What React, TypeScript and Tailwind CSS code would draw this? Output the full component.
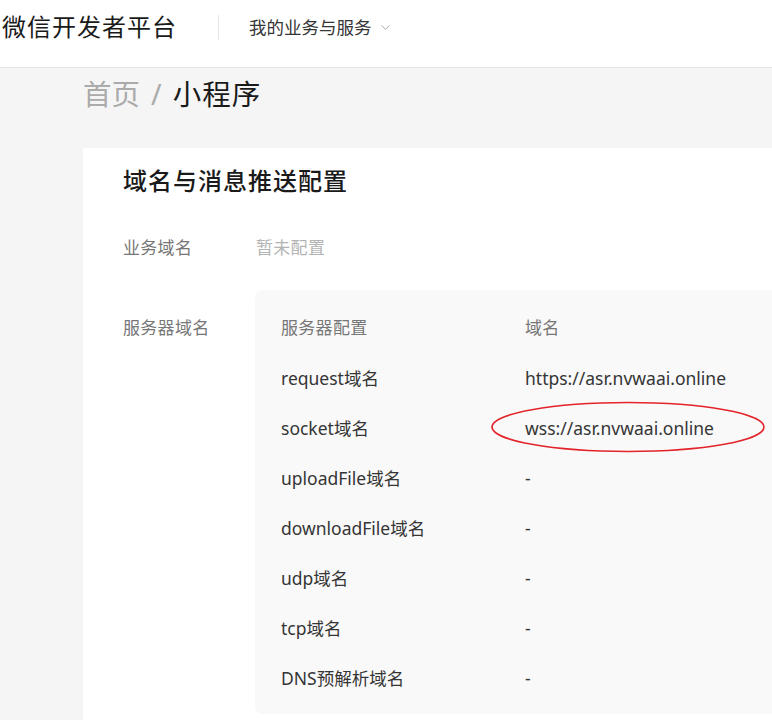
import { ChevronDown } from 'lucide-react';

const font = { fontFamily: '"Noto Sans", "Noto Sans CJK SC", sans-serif' };

const rows: [string, string][] = [
  ['request域名', 'https://asr.nvwaai.online'],
  ['socket域名', 'wss://asr.nvwaai.online'],
  ['uploadFile域名', '-'],
  ['downloadFile域名', '-'],
  ['udp域名', '-'],
  ['tcp域名', '-'],
  ['DNS预解析域名', '-'],
];

export default function App() {
  return (
    <div className="w-[772px] h-[720px] overflow-hidden bg-[#f5f5f5]" style={font}>
      <header className="h-[68px] bg-white border-b border-[#e4e4e4]">
        <div className="h-[54px] flex items-center">
          <h1 className="pl-[2px] text-[24px] text-[#1a1a1a] tracking-[1px] leading-none">微信开发者平台</h1>
          <div className="ml-[41px] w-px h-[25px] bg-[#e5e5e5]" />
          <div className="ml-[30px] flex items-center gap-[6px] text-[17.5px] text-[#353535]">
            我的业务与服务
            <ChevronDown size={15} strokeWidth={1.3} className="text-[#9a9a9a] mt-[1px]" />
          </div>
        </div>
      </header>

      <div className="pl-[83px]">
        <div className="pt-[6px] h-[80px] flex items-start text-[28.5px] leading-[40px]">
          <span className="text-[#ababab]">首页</span>
          <span className="text-[#ababab] mx-[11px]">/</span>
          <span className="text-[#1a1a1a] tracking-[1px]">小程序</span>
        </div>

        <div className="w-[900px] bg-white pl-[40px] pt-[16px] pb-[40px]">
          <h2 className="text-[24px] leading-[34px] font-medium text-[#1a1a1a] tracking-[1px]">域名与消息推送配置</h2>

          <div className="mt-[25px] h-[50px] flex items-center text-[17px]">
            <span className="w-[133px] text-[#777] tracking-[0.3px]">业务域名</span>
            <span className="text-[#b4b4b4] tracking-[0.3px]">暂未配置</span>
          </div>

          <div className="mt-[17px] flex items-start">
            <div className="w-[132px] h-[76px] flex items-center text-[17px] text-[#777] tracking-[0.3px]">服务器域名</div>
            <div className="flex-1 bg-[#f9f9f9] rounded-[8px] pl-[26px] pt-[13px] pb-[11px]">
              <div className="h-[50px] flex items-center text-[17px] text-[#777]">
                <span className="w-[244px] tracking-[0.3px]">服务器配置</span>
                <span className="tracking-[0.3px]">域名</span>
              </div>
              {rows.map(([name, value]) => (
                <div key={name} className="h-[50px] flex items-center text-[17.5px] text-[#353535]">
                  <span className="w-[244px]">{name}</span>
                  <span className="relative">
                    {value}
                    {name === 'socket域名' && (
                      <svg
                        className="absolute left-[-35px] top-[-14px] pointer-events-none"
                        width="276"
                        height="54"
                        viewBox="0 0 276 54"
                      >
                        <ellipse cx="138" cy="26" rx="136" ry="24.5" fill="none" stroke="#e3242b" strokeWidth="1.6" />
                      </svg>
                    )}
                  </span>
                </div>
              ))}
            </div>
          </div>
        </div>
      </div>
    </div>
  );
}
